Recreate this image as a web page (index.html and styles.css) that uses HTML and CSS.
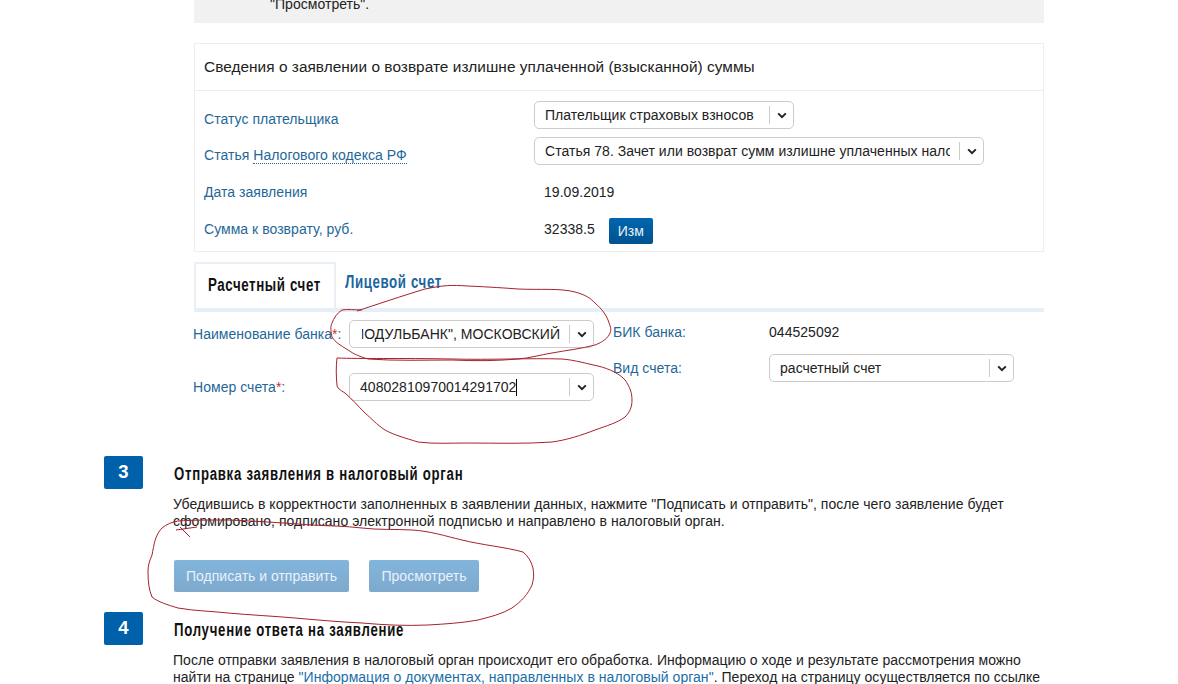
FILE: index.html
```html
<!DOCTYPE html>
<html lang="ru">
<head>
<meta charset="utf-8">
<title>Заявление о возврате</title>
<link rel="stylesheet" href="styles.css">
</head>
<body>
<div class="page">
  <div class="section notice">"Просмотреть".</div>

  <div class="section panel">
    <div class="panel-title">Сведения о заявлении о возврате излишне уплаченной (взысканной) суммы</div>
    <div class="panel-body">
      <div class="row">
        <div class="label label-low">Статус плательщика</div>
        <div class="select select-s1"><span class="select-text">Плательщик страховых взносов</span><span class="select-arrow"><svg viewBox="0 0 10 7" width="10" height="7"><path d="M1.2 1.4 5 5.2 8.8 1.4" fill="none" stroke="#222" stroke-width="2"/></svg></span></div>
      </div>
      <div class="row">
        <div class="label label-low">Статья <span class="dotted">Налогового кодекса РФ</span></div>
        <div class="select select-s2"><span class="select-text">Статья 78. Зачет или возврат сумм излишне уплаченных налогов</span><span class="select-arrow"><svg viewBox="0 0 10 7" width="10" height="7"><path d="M1.2 1.4 5 5.2 8.8 1.4" fill="none" stroke="#222" stroke-width="2"/></svg></span></div>
      </div>
      <div class="row row-date">
        <div class="label">Дата заявления</div>
        <div class="value">19.09.2019</div>
      </div>
      <div class="row row-sum">
        <div class="label">Сумма к возврату, руб.</div>
        <div class="value value-sum"><span>32338.5</span><button class="btn-small" type="button">Изм</button></div>
      </div>
    </div>
  </div>

  <div class="section tabs">
    <div class="tab tab-active"><span class="tab-text">Расчетный счет</span></div>
    <div class="tab tab-link"><span class="tab-text">Лицевой счет</span></div>
  </div>

  <div class="section form">
    <div class="form-col form-left">
      <div class="frow">
        <div class="label">Наименование банка<span class="req">*</span>:</div>
        <div class="select"><span class="select-text select-end"><span>КБ "МОДУЛЬБАНК", МОСКОВСКИЙ</span></span><span class="select-arrow"><svg viewBox="0 0 10 7" width="10" height="7"><path d="M1.2 1.4 5 5.2 8.8 1.4" fill="none" stroke="#222" stroke-width="2"/></svg></span></div>
      </div>
      <div class="frow">
        <div class="label">Номер счета<span class="req">*</span>:</div>
        <div class="select"><span class="select-text"><span class="caret">40802810970014291702</span></span><span class="select-arrow"><svg viewBox="0 0 10 7" width="10" height="7"><path d="M1.2 1.4 5 5.2 8.8 1.4" fill="none" stroke="#222" stroke-width="2"/></svg></span></div>
      </div>
    </div>
    <div class="form-col form-right">
      <div class="frow">
        <div class="label">БИК банка:</div>
        <div class="plain">044525092</div>
      </div>
      <div class="frow">
        <div class="label">Вид счета:</div>
        <div class="select"><span class="select-text">расчетный счет</span><span class="select-arrow"><svg viewBox="0 0 10 7" width="10" height="7"><path d="M1.2 1.4 5 5.2 8.8 1.4" fill="none" stroke="#222" stroke-width="2"/></svg></span></div>
      </div>
    </div>
  </div>

  <div class="step step-3">
    <div class="badge">3</div>
    <div class="step-body">
      <h2 class="step-title">Отправка заявления в налоговый орган</h2>
      <p class="step-text">Убедившись в корректности заполненных в заявлении данных, нажмите "Подписать и отправить", после чего заявление будет сформировано, подписано электронной подписью и направлено в налоговый орган.</p>
      <div class="actions">
        <button class="btn-muted btn-sign" type="button">Подписать и отправить</button>
        <button class="btn-muted btn-view" type="button">Просмотреть</button>
      </div>
    </div>
  </div>

  <div class="step step-4">
    <div class="badge">4</div>
    <div class="step-body">
      <h2 class="step-title">Получение ответа на заявление</h2>
      <p class="step-text">После отправки заявления в налоговый орган происходит его обработка. Информацию о ходе и результате рассмотрения можно найти на странице <a class="link" href="#">"Информация о документах, направленных в налоговый орган"</a>. Переход на страницу осуществляется по ссылке</p>
    </div>
  </div>
</div>

<svg class="scribble" viewBox="0 0 1178 684" width="1178" height="684" aria-hidden="true">
  <path d="M357 311C372 306 405 295 425 289C445 285 450 285 468 286C490 287 505 288 518 289C540 290 560 288 575 292C586 295 590 298 595 303C602 309 606 315 608 320C610 326 612 329 610 333C608 338 603 342 595 345C580 349 568 350 552 353C540 355 530 358 518 359C495 361 475 361 452 360C425 360 395 361 368 359C358 356 354 354 348 350C340 345 335 342 332 337C331 332 330 327 332 323C334 318 337 313 342 310C348 309 355 310 362 310"/>
  <path d="M337 358C360 359 400 358 452 359C490 360 530 358 562 359C575 360 588 364 598 366C610 369 620 374 625 380C630 387 632 393 632 400C632 407 630 412 625 417C617 423 606 426 595 430C582 435 567 440 552 442C525 444 495 443 468 443C450 443 433 444 418 442C405 438 394 435 385 430C376 424 372 419 365 413C358 406 352 399 345 393C340 390 337 388 337 385C336 376 336 366 337 358Z"/>
  <path d="M162 528C155 535 154 545 152 555C149 562 148 566 148 572C148 582 149 590 152 597C158 602 168 605 178 608C195 611 210 611 228 613C250 615 272 616 295 618C318 620 340 622 362 623C385 625 405 626 428 625C445 624 462 623 478 620C490 617 502 614 512 608C522 601 528 594 532 585C534 578 534 574 533 568C531 561 528 556 523 552C505 547 482 545 462 540C445 536 430 531 412 530C395 529 378 530 362 528C345 526 330 526 312 525C285 523 255 521 228 520C210 520 192 520 178 521C172 522 167 524 162 528Z"/>
  <path d="M180 527 190 537M176 530 197 527"/>
</svg>
</body>
</html>
```

FILE: styles.css
```css
* { box-sizing: border-box; }

html, body {
  margin: 0;
  padding: 0;
  height: 684px;
  overflow: hidden;
  background: #fff;
}

body {
  position: relative;
  font-family: "Liberation Sans", Arial, sans-serif;
  font-size: 14px;
  line-height: 17px;
  letter-spacing: 0.035px;
  color: #222;
}

.page {
  width: 1044px;
  margin-top: -4px;
  padding-left: 104px;
}

.section { margin-left: 90px; }

.notice {
  height: 27px;
  padding-left: 76px;
  background: #f1f1f1;
}

.panel {
  margin-top: 20px;
  height: 209px;
  border: 1px solid #eeeeee;
}

.panel-title {
  height: 47px;
  padding: 14px 0 0 9px;
  font-size: 15.4px;
  border-bottom: 1px solid #eeeeee;
}

.panel-body { padding: 10px 0 0 9px; }

.row {
  display: grid;
  grid-template-columns: 330px 1fr;
  align-items: center;
  height: 28px;
  margin-bottom: 8px;
}

.row-date { margin-top: 13px; }
.row-sum { height: 30px; }

.label { color: #1f6798; }
.label-low { padding-top: 8px; }

.dotted { border-bottom: 1px dotted #1f6798; }
.req { color: #c9302c; }

.value { padding-left: 10px; }

.value-sum {
  display: flex;
  align-items: center;
  gap: 14px;
}

.btn-small {
  width: 44px;
  height: 26px;
  margin-top: 4px;
  padding: 0;
  border: 0;
  border-radius: 2px;
  background: linear-gradient(#0066b0, #00528f);
  color: #e8f2fa;
  font: 14px/26px "Liberation Sans", Arial, sans-serif;
}

.select {
  display: flex;
  align-items: center;
  height: 28px;
  width: 245px;
  padding: 0 0 0 10px;
  background: #fff;
  border: 1px solid #cccccc;
  border-radius: 5px;
}

.select-s1 { width: 260px; }
.select-s2 { width: 450px; }

.select-text {
  flex: 1;
  min-width: 0;
  display: flex;
  overflow: hidden;
  white-space: nowrap;
}

.select-end {
  justify-content: flex-end;
  margin-left: 2px;
}

.select-arrow {
  display: flex;
  align-items: center;
  justify-content: center;
  flex: none;
  width: 24px;
  height: 18px;
  margin-left: 9px;
  border-left: 1px solid #cccccc;
}

.caret { border-right: 1px solid #000; }

.tabs {
  display: flex;
  margin-top: 10px;
  height: 50px;
  border-bottom: 4px solid #e6eef6;
}

.tab {
  font-weight: 700;
  font-size: 18px;
  white-space: nowrap;
}

.tab-text {
  display: inline-block;
  letter-spacing: 0.8px;
  transform: scaleX(0.74);
  transform-origin: left center;
}

.tab-active {
  width: 142px;
  height: 50px;
  padding: 13px 0 0 12px;
  color: #111;
  border: 2px solid #eaf0f6;
  border-bottom: 0;
}

.tab-link {
  padding: 12px 0 0 9px;
  color: #1c669e;
}

.form { display: flex; gap: 19px; margin-left: 89px; }

.form-col {
  display: flex;
  flex-direction: column;
}

.form-left { padding-top: 8px; gap: 25px; }
.form-right { padding-top: 6px; gap: 8px; }

.frow {
  display: grid;
  grid-template-columns: 156px 245px;
  align-items: center;
  height: 28px;
}

.step {
  display: grid;
  grid-template-columns: 39px 1fr;
  column-gap: 30px;
}

.step-3 { margin-top: 55px; }
.step-4 { margin-top: 20px; }

.badge {
  height: 33px;
  border-radius: 2px;
  background: #0060aa;
  color: #fff;
  font-weight: 700;
  font-size: 18.5px;
  line-height: 32px;
  text-align: center;
}

.step-title {
  margin: 0 0 4px 1px;
  height: 36px;
  font-weight: 700;
  font-size: 18px;
  line-height: 36px;
  letter-spacing: 1px;
  white-space: nowrap;
  transform: scaleX(0.733);
  transform-origin: left center;
  color: #111;
}

.step-text { margin: 0; }

.link { color: #1a6ea8; text-decoration: none; }

.actions {
  display: flex;
  gap: 20px;
  margin-top: 30px;
  margin-left: 1px;
}

.btn-muted {
  height: 32px;
  padding: 0;
  border: 0;
  border-radius: 2px;
  background: linear-gradient(#82b5dc, #7ea9cd);
  color: #e9f2f9;
  font: 14px/32px "Liberation Sans", Arial, sans-serif;
}

.btn-sign { width: 175px; }
.btn-view { width: 110px; }

.scribble {
  position: absolute;
  left: 0;
  top: 0;
  pointer-events: none;
  fill: none;
  stroke: #a5222c;
  stroke-width: 1;
}
```
